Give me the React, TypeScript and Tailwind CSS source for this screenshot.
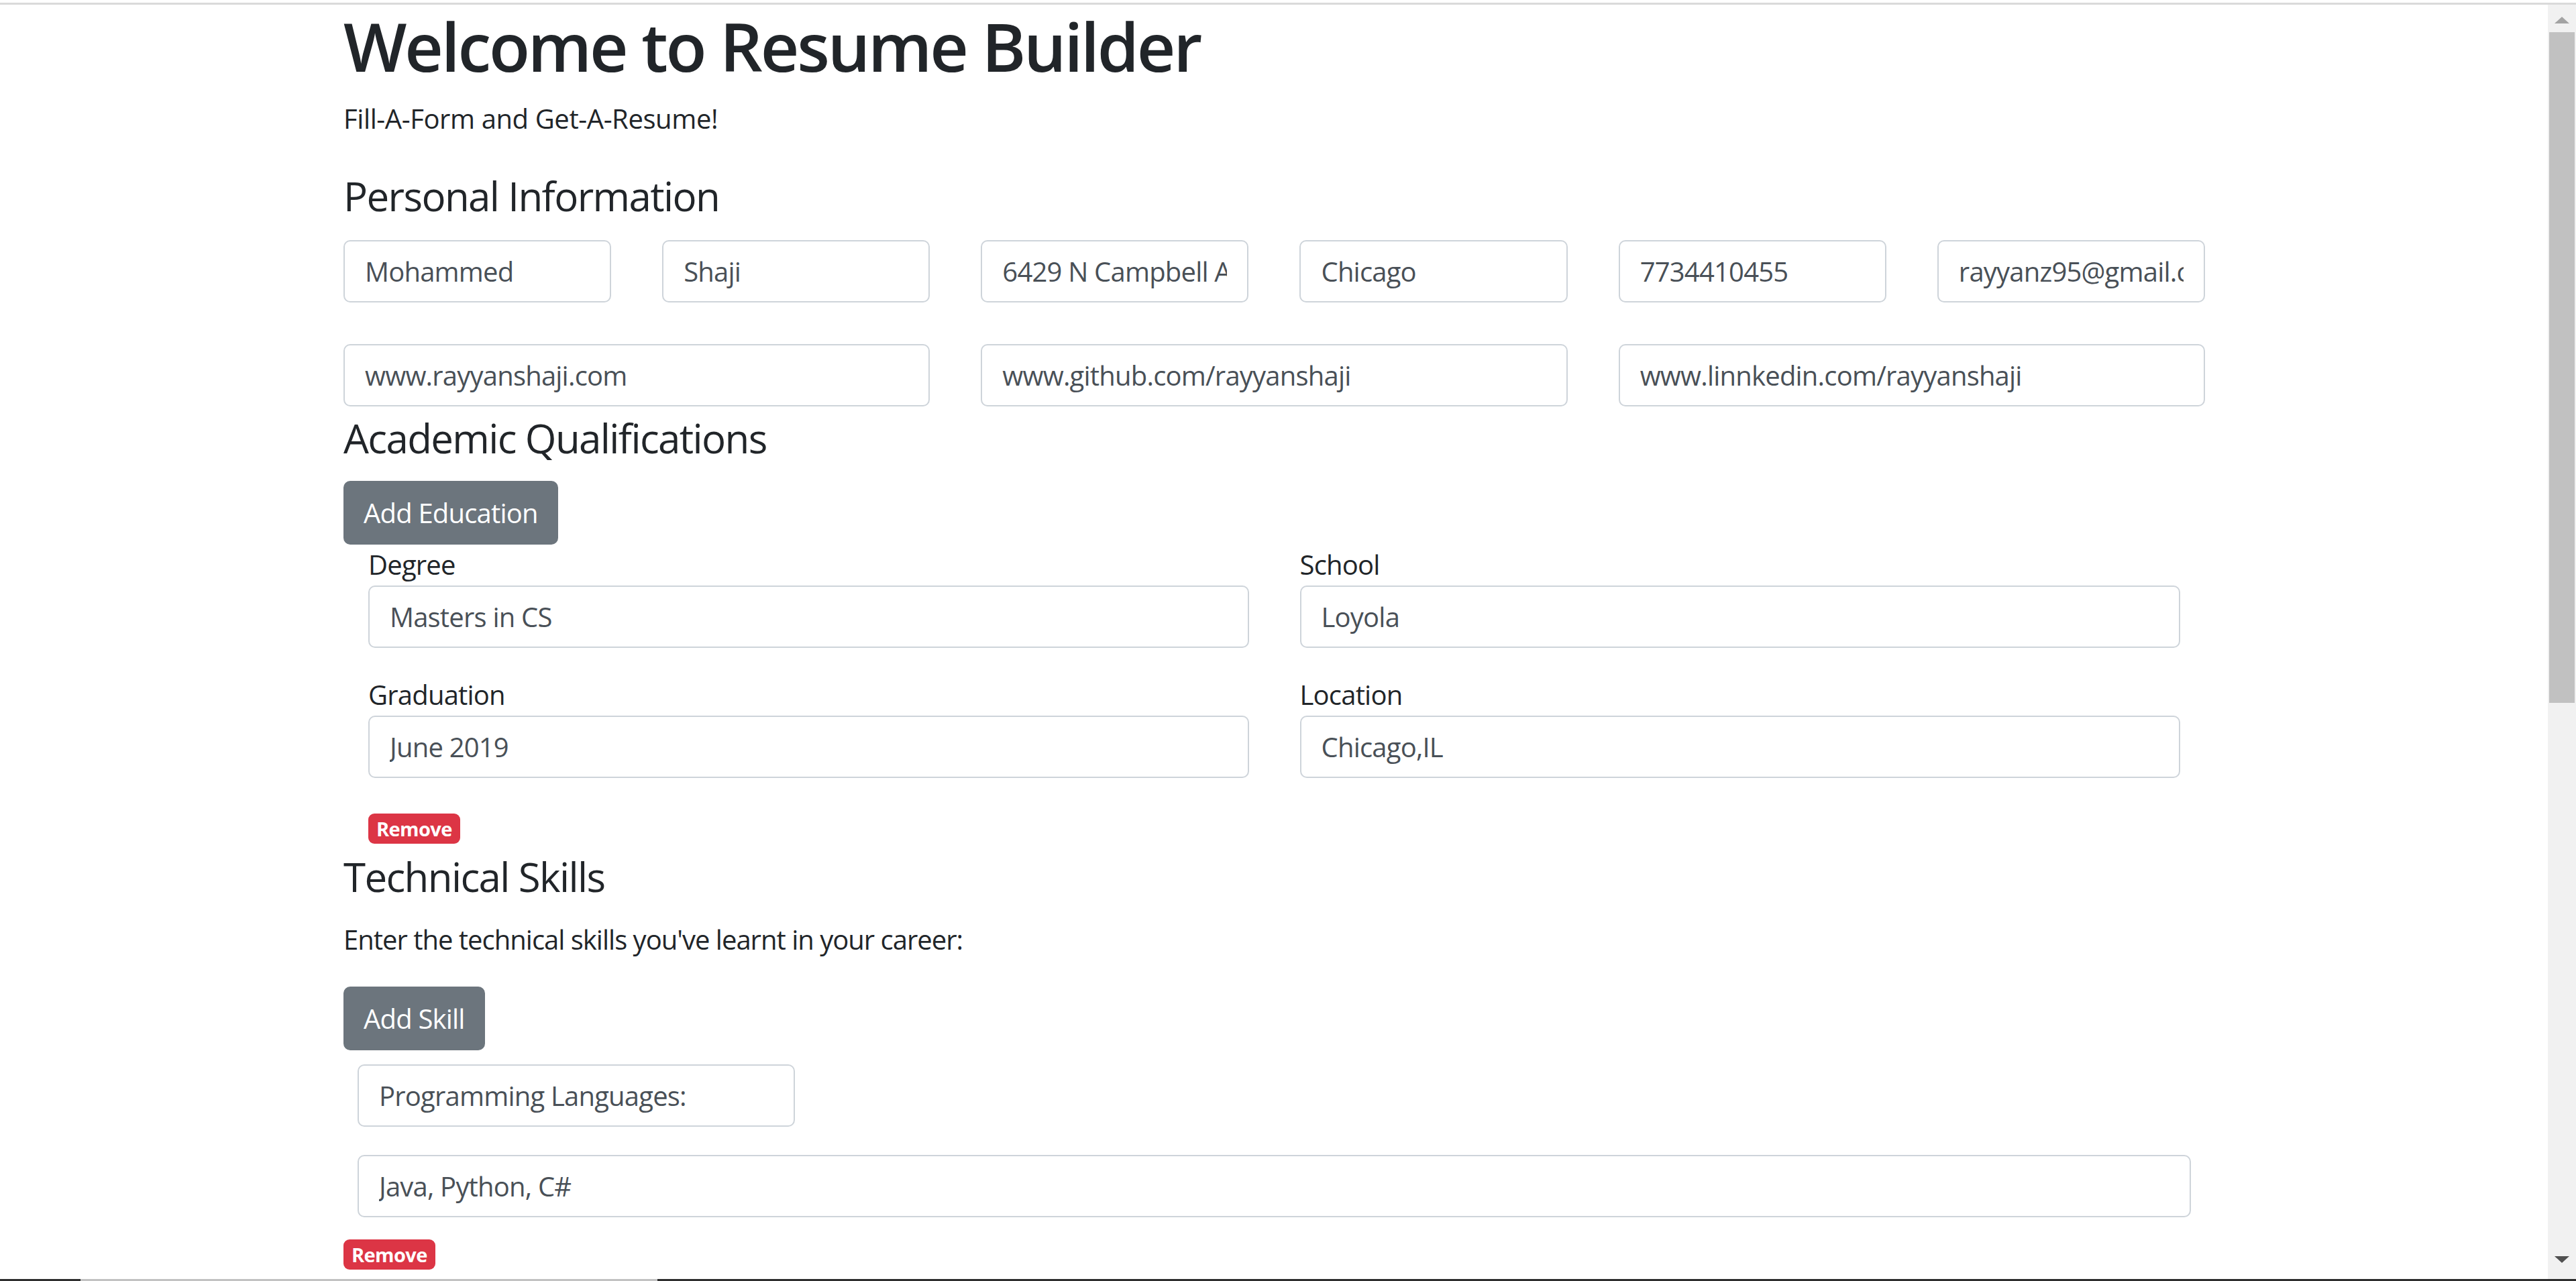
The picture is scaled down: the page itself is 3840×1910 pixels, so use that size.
import React from 'react';

const font = "font-['Open_Sans',sans-serif]";

const Field = ({ value, className = '' }: { value: string; className?: string }) => (
    <input
        readOnly
        defaultValue={value}
        className={`h-[93px] min-w-0 rounded-[10px] border-2 border-[#ced4da] bg-white px-[30px] text-[40px] tracking-[-0.02em] text-[#495057] outline-none ${font} ${className}`}
    />
);

const Labeled = ({ label, value }: { label: string; value: string }) => (
    <div className="flex flex-col">
        <label className="text-[40px] leading-[60px] tracking-[-0.02em] text-[#212529]">{label}</label>
        <Field value={value} className="mt-px w-full" />
    </div>
);

const Badge = ({ className = '' }: { className?: string }) => (
    <span className={`self-start rounded-[9px] bg-[#dc3545] px-[12px] py-[7.5px] text-[29px] font-bold leading-[30px] tracking-[-0.6px] text-white ${className}`}>
        Remove
    </span>
);

const Button = ({ children, className = '' }: { children: React.ReactNode; className?: string }) => (
    <button className={`h-[95px] self-start rounded-[10px] bg-[#6c757d] px-[30px] text-[40px] leading-[60px] tracking-[-0.02em] text-white ${className}`}>
        {children}
    </button>
);

export default function App() {
    const personal = ['Mohammed', 'Shaji', '6429 N Campbell Ave', 'Chicago', '7734410455', 'rayyanz95@gmail.com'];
    const links = ['www.rayyanshaji.com', 'www.github.com/rayyanshaji', 'www.linnkedin.com/rayyanshaji'];

    return (
        <div className={`flex h-[1910px] w-[3840px] flex-col overflow-hidden bg-white text-[#212529] ${font}`}>
            <div className="h-[4px]" />
            <div className="h-[3px] bg-[#dadada]" />

            <div className="flex min-h-0 flex-1">
                <main className="min-w-0 flex-1 overflow-hidden">
                    <div className="ml-[512px] flex w-[2775px] flex-col">
                        <h1 className="mt-[1px] text-[100px] font-semibold leading-[120px] tracking-[-0.032em]">Welcome to Resume Builder</h1>
                        <p className="mt-[19px] text-[40px] leading-[60px] tracking-[-0.01em]">Fill-A-Form and Get-A-Resume!</p>

                        {/* personal info */}
                        <h4 className="mt-[49px] text-[60px] leading-[72px] tracking-[-0.027em]">Personal Information</h4>
                        <div className="mt-[30px] grid grid-cols-6 gap-x-[76px]">
                            {personal.map((v) => (
                                <Field key={v} value={v} className="w-full" />
                            ))}
                        </div>
                        <div className="mt-[62px] grid grid-cols-3 gap-x-[76px]">
                            {links.map((v) => (
                                <Field key={v} value={v} className="w-full" />
                            ))}
                        </div>

                        {/* education */}
                        <h4 className="mt-[11px] text-[60px] leading-[72px] tracking-[-0.027em]">Academic Qualifications</h4>
                        <Button className="mt-[28px]">Add Education</Button>
                        <div className="flex flex-col px-[37px]">
                            <div className="grid grid-cols-2 gap-x-[76px] gap-y-[40px]">
                                <Labeled label="Degree" value="Masters in CS" />
                                <Labeled label="School" value="Loyola" />
                                <Labeled label="Graduation" value="June 2019" />
                                <Labeled label="Location" value="Chicago,IL" />
                            </div>
                            <Badge className="mt-[53px]" />
                        </div>

                        {/* skills */}
                        <h4 className="mt-[13px] text-[60px] leading-[72px] tracking-[-0.027em]">Technical Skills</h4>
                        <p className="mt-[28px] text-[40px] leading-[60px] tracking-[-0.025em]">Enter the technical skills you've learnt in your career:</p>
                        <Button className="mt-[40px]">Add Skill</Button>
                        <div className="flex flex-col px-[21px]">
                            <Field value="Programming Languages:" className="mt-[21px] w-[652px]" />
                            <Field value="Java, Python, C#" className="mt-[42px] w-full" />
                        </div>
                        <Badge className="mt-[33px]" />
                    </div>
                </main>

                {/* scrollbar */}
                <div className="flex w-[42px] flex-col bg-[#f1f1f1]">
                    <div className="flex h-[41px] items-center justify-center pt-[4px]">
                        <svg width="22" height="10" viewBox="0 0 22 10"><polygon points="0,10 11,0 22,10" fill="#a3a3a3" /></svg>
                    </div>
                    <div className="ml-[2px] h-[1000px] w-[38px] bg-[#c1c1c1]" />
                    <div className="flex-1" />
                    <div className="flex h-[40px] items-start justify-center pt-[6px]">
                        <svg width="22" height="10" viewBox="0 0 22 10"><polygon points="0,0 22,0 11,10" fill="#505050" /></svg>
                    </div>
                </div>
            </div>

            <div className="flex h-[3px]">
                <div className="w-[120px] bg-[#2e2e2e]" />
                <div className="w-[860px] bg-[#c2c2c2]" />
                <div className="flex-1 bg-[#2e2e2e]" />
            </div>
        </div>
    );
}
